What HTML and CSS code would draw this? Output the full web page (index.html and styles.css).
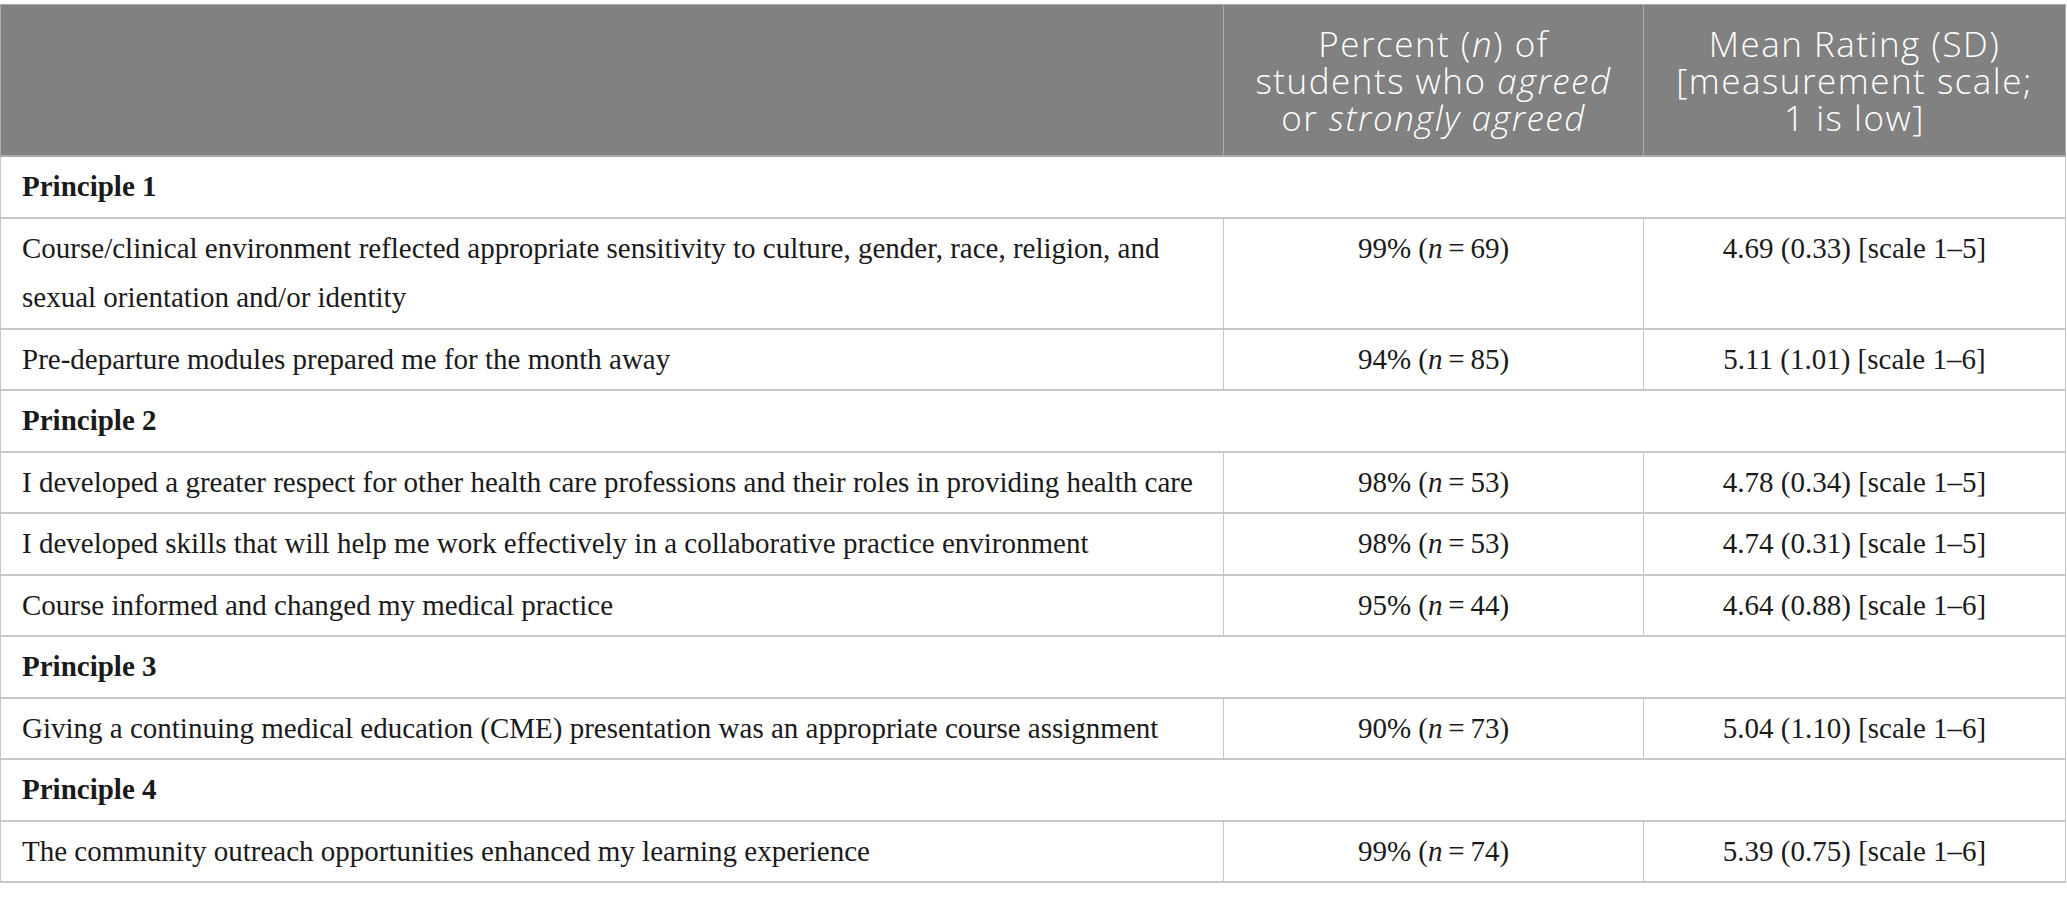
FILE: index.html
```html
<!DOCTYPE html>
<html lang="en">
<head>
    <meta charset="UTF-8" />
    <meta name="viewport" content="width=device-width, initial-scale=1.0" />
    <title>Student survey results by principle</title>
    <link rel="stylesheet" href="styles.css">
</head>
<body>
    <table class="results">
        <colgroup>
            <col class="col-item">
            <col class="col-pct">
            <col class="col-mean">
        </colgroup>
        <thead>
            <tr>
                <th></th>
                <th>Percent (<i>n</i>) of<br>students who <i>agreed</i><br>or <i>strongly agreed</i></th>
                <th>Mean Rating (SD)<br>[measurement scale;<br>1 is low]</th>
            </tr>
        </thead>
        <tbody>
            <tr class="group">
                <td colspan="3">Principle 1</td>
            </tr>
            <tr>
                <td>Course/clinical environment reflected appropriate sensitivity to culture, gender, race, religion, and<br>sexual orientation and/or identity</td>
                <td class="num">99% (<i>n</i>&#8201;=&#8201;69)</td>
                <td class="num">4.69 (0.33) [scale 1–5]</td>
            </tr>
            <tr>
                <td>Pre-departure modules prepared me for the month away</td>
                <td class="num">94% (<i>n</i>&#8201;=&#8201;85)</td>
                <td class="num">5.11 (1.01) [scale 1–6]</td>
            </tr>
            <tr class="group">
                <td colspan="3">Principle 2</td>
            </tr>
            <tr>
                <td>I developed a greater respect for other health care professions and their roles in providing health care</td>
                <td class="num">98% (<i>n</i>&#8201;=&#8201;53)</td>
                <td class="num">4.78 (0.34) [scale 1–5]</td>
            </tr>
            <tr>
                <td>I developed skills that will help me work effectively in a collaborative practice environment</td>
                <td class="num">98% (<i>n</i>&#8201;=&#8201;53)</td>
                <td class="num">4.74 (0.31) [scale 1–5]</td>
            </tr>
            <tr>
                <td>Course informed and changed my medical practice</td>
                <td class="num">95% (<i>n</i>&#8201;=&#8201;44)</td>
                <td class="num">4.64 (0.88) [scale 1–6]</td>
            </tr>
            <tr class="group">
                <td colspan="3">Principle 3</td>
            </tr>
            <tr>
                <td>Giving a continuing medical education (CME) presentation was an appropriate course assignment</td>
                <td class="num">90% (<i>n</i>&#8201;=&#8201;73)</td>
                <td class="num">5.04 (1.10) [scale 1–6]</td>
            </tr>
            <tr class="group">
                <td colspan="3">Principle 4</td>
            </tr>
            <tr>
                <td>The community outreach opportunities enhanced my learning experience</td>
                <td class="num">99% (<i>n</i>&#8201;=&#8201;74)</td>
                <td class="num">5.39 (0.75) [scale 1–6]</td>
            </tr>
        </tbody>
    </table>
</body>
</html>
```

FILE: styles.css
```css
body {
    margin: 0;
    padding-top: 4px;
    background-color: #fff;
    font-family: "Liberation Serif", "Times New Roman", serif;
    color: #1a1a1a;
}

.results {
    width: 2066px;
    border-collapse: collapse;
    table-layout: fixed;
}

.col-item {
    width: 1223px;
}

.col-pct {
    width: 420px;
}

.results th {
    height: 150px;
    padding: 0 6px;
    background-color: #808180;
    color: #fff;
    font-family: "Open Sans", Lato, sans-serif;
    font-weight: 300;
    font-size: 35px;
    line-height: 37px;
    letter-spacing: 1.5px;
    text-align: center;
    vertical-align: middle;
    border: 1px solid #a9aaa9;
    border-bottom: 2px solid #a9aaa9;
}

.results td {
    padding: 5px 20px 5px 21px;
    font-size: 29px;
    line-height: 49.5px;
    vertical-align: top;
    border-left: 1px solid #c6c6c6;
    border-right: 1px solid #c6c6c6;
    border-bottom: 2px solid #c8c8c8;
}

.results td.num {
    text-align: center;
    padding-left: 10px;
    padding-right: 10px;
}

.results .group td {
    font-weight: bold;
}
```
